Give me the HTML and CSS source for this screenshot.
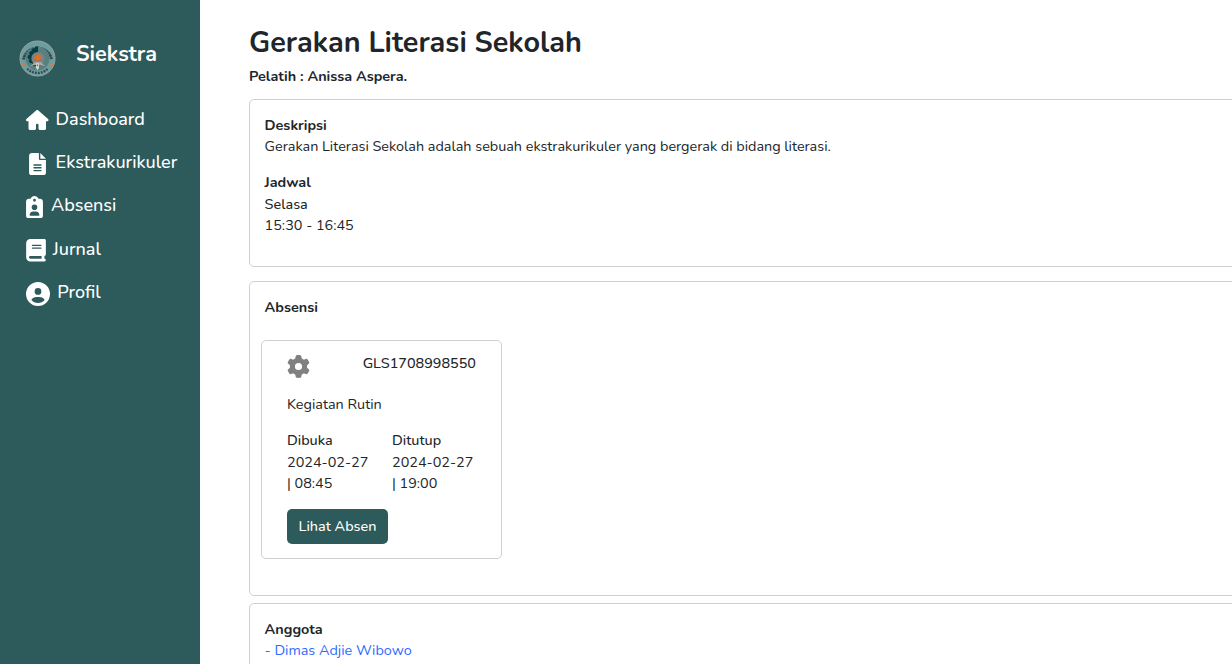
FILE: index.html
```html
<!DOCTYPE html>
<html lang="id">
<head>
<meta charset="utf-8">
<title>Siekstra</title>
<link rel="stylesheet" href="styles.css">
</head>
<body>
<div class="app">
  <aside class="sidebar">
    <div class="brand">
      <svg class="logo" viewBox="0 0 38 38">
        <circle cx="19" cy="19" r="18" fill="#6f9c9d" stroke="#98a3a1" stroke-width="1"/>
        <path d="M4.500 20A14.800 14.800 0 0 1 33.500 20" fill="none" stroke="#304648" stroke-width="2.800" stroke-dasharray="2 .5 2.500 .4"/>
        <path d="M8.500 29.500A14.800 14.800 0 0 0 29.500 29.500" fill="none" stroke="#304648" stroke-width="2.400" stroke-dasharray="1.800 1.200"/>
        <circle cx="19" cy="19" r="12.300" fill="#558182"/>
        <path d="M19 7l-2 .3-.5 2-2-.8-1.300 1.400.6 1.800-2.100.3-1.200 1.800 1.300 1.400-2.400 1v2.500l2.400.8-1.600 1.800 1.500 2.200 2.100-.6-.2 2.600 2.200 1 3.200-1.500z" fill="#083d40" stroke="#083d40"/>
        <circle cx="19.500" cy="19" r="6.800" fill="#7b8281"/>
        <path d="M21 14.500l-5.500 4.300h3.800l-2 2.700 6.500-4h-4z" fill="#fa6a16" stroke="#fa6a16" stroke-width=".8"/>
        <path d="M11.500 27l4.500-4.500h6.500L27 27l-4.500-1.200h-6.500z" fill="#aaa6a3"/>
        <path d="M17.500 24h3v4.500L19 31l-1.500-2.500z" fill="#d8dcda"/>
        <path d="M18.300 25h1.400v2h-1.400z" fill="#b7583a"/>
        <circle cx="4.300" cy="25" r="1.200" fill="#f27429"/><circle cx="33.700" cy="25" r="1.200" fill="#f27429"/>
      </svg>
      <span class="brand-name">Siekstra</span>
    </div>
    <nav class="menu">
      <a class="item"><svg class="icon house" viewBox="0 0 576 512"><path d="M575.800 255.500c0 18-15 32.100-32 32.100h-32l.7 160.200c0 2.700-.2 5.400-.5 8.100V472c0 22.100-17.900 40-40 40H360c-22.100 0-40-17.900-40-40v-88c0-17.700-14.300-32-32-32s-32 14.300-32 32v88c0 22.100-17.900 40-40 40H104c-22.100 0-40-17.900-40-40V287.600H32c-18 0-32-14-32-32.100 0-9 3-17 10-24L266.400 8c7-7 15-8 22-8s15 2 21 7l255.400 224.500c8 7 12 15 11 24z"/></svg><span>Dashboard</span></a>
      <a class="item"><svg class="icon file" viewBox="0 0 384 512"><path d="M64 0C28.700 0 0 28.700 0 64v384c0 35.300 28.700 64 64 64h256c35.300 0 64-28.700 64-64V160H256c-17.700 0-32-14.300-32-32V0H64zm192 0v128h128L256 0zM112 256h160c8.800 0 16 7.200 16 16s-7.200 16-16 16H112c-8.800 0-16-7.200-16-16s7.200-16 16-16zm0 64h160c8.800 0 16 7.200 16 16s-7.200 16-16 16H112c-8.800 0-16-7.200-16-16s7.200-16 16-16zm0 64h160c8.800 0 16 7.200 16 16s-7.200 16-16 16H112c-8.800 0-16-7.200-16-16s7.200-16 16-16z"/></svg><span>Ekstrakurikuler</span></a>
      <a class="item"><svg class="icon clip" viewBox="0 0 384 512"><path d="M192 0c-41.800 0-77.400 26.700-90.500 64H64C28.700 64 0 92.700 0 128v320c0 35.300 28.700 64 64 64h256c35.300 0 64-28.700 64-64V128c0-35.300-28.700-64-64-64h-37.500C269.400 26.700 233.800 0 192 0zm0 64a32 32 0 1 1 0 64 32 32 0 1 1 0-64zM128 256a64 64 0 1 1 128 0 64 64 0 1 1-128 0zM80 432c0-44.200 35.800-80 80-80h64c44.200 0 80 35.800 80 80 0 8.800-7.200 16-16 16H96c-8.800 0-16-7.200-16-16z"/></svg><span>Absensi</span></a>
      <a class="item"><svg class="icon book" viewBox="0 0 448 512"><path d="M96 0C43 0 0 43 0 96v320c0 53 43 96 96 96h320c17.700 0 32-14.300 32-32s-14.300-32-32-32v-64c17.700 0 32-14.300 32-32V32c0-17.700-14.300-32-32-32H96zm0 384h256v64H96c-17.700 0-32-14.300-32-32s14.300-32 32-32zm32-240c0-8.800 7.200-16 16-16h192c8.800 0 16 7.200 16 16s-7.200 16-16 16H144c-8.800 0-16-7.200-16-16zm16 48h192c8.800 0 16 7.200 16 16s-7.200 16-16 16H144c-8.800 0-16-7.200-16-16s7.200-16 16-16z"/></svg><span>Jurnal</span></a>
      <a class="item"><svg class="icon user" viewBox="0 0 512 512"><path d="M399 384.200C376.900 345.800 335.400 320 288 320h-64c-47.400 0-88.900 25.800-111 64.200 35.200 39.200 86.200 63.800 143 63.800s107.800-24.700 143-63.800zM0 256a256 256 0 1 1 512 0A256 256 0 1 1 0 256zm256 16a72 72 0 1 0 0-144 72 72 0 1 0 0 144z"/></svg><span>Profil</span></a>
    </nav>
  </aside>

  <main class="main">
    <h1 class="title">Gerakan Literasi Sekolah</h1>
    <p class="coach">Pelatih : Anissa Aspera.</p>

    <section class="card about">
      <p class="label heading">Deskripsi</p>
      <p>Gerakan Literasi Sekolah adalah sebuah ekstrakurikuler yang bergerak di bidang literasi.</p>
      <p class="label schedule">Jadwal</p>
      <p class="medium">Selasa</p>
      <p>15:30 - 16:45</p>
    </section>

    <section class="card attendance">
      <p class="label heading">Absensi</p>
      <article class="session">
        <header class="session-head">
          <svg class="gear" viewBox="0 0 512 512"><path d="M495.900 166.600c3.200 8.700.5 18.400-6.400 24.600l-43.300 39.400c1.100 8.300 1.700 16.800 1.700 25.400s-.6 17.100-1.700 25.400l43.300 39.400c6.900 6.200 9.600 15.900 6.400 24.600-4.400 11.900-9.700 23.300-15.800 34.300l-4.700 8.100c-6.600 11-14 21.400-22.100 31.200-5.900 7.200-15.700 9.600-24.500 6.800l-55.700-17.700c-13.400 10.300-28.200 18.900-44 25.400l-12.500 57.100c-2 9.100-9 16.300-18.200 17.800-13.800 2.300-28 3.500-42.500 3.500s-28.700-1.200-42.500-3.500c-9.200-1.500-16.200-8.700-18.200-17.800l-12.500-57.100c-15.800-6.500-30.600-15.100-44-25.400l-55.600 17.800c-8.800 2.800-18.600.3-24.500-6.800-8.100-9.800-15.500-20.200-22.100-31.200l-4.700-8.100c-6.100-11-11.400-22.400-15.800-34.300-3.200-8.700-.5-18.400 6.400-24.600l43.300-39.400C64.600 273.100 64 264.600 64 256s.6-17.100 1.700-25.400l-43.300-39.400c-6.900-6.200-9.600-15.900-6.400-24.600 4.400-11.900 9.700-23.300 15.800-34.300l4.700-8.100c6.600-11 14-21.400 22.100-31.200 5.900-7.200 15.700-9.600 24.500-6.800l55.700 17.700c13.400-10.300 28.200-18.900 44-25.400l12.500-57.100c2-9.100 9-16.300 18.200-17.800C227.300 1.200 241.500 0 256 0s28.700 1.200 42.500 3.500c9.200 1.500 16.200 8.700 18.200 17.800l12.500 57.100c15.800 6.500 30.600 15.100 44 25.400l55.700-17.700c8.800-2.800 18.600-.3 24.500 6.800 8.100 9.800 15.500 20.200 22.100 31.200l4.700 8.100c6.100 11 11.400 22.400 15.800 34.300zM256 336a80 80 0 1 0 0-160 80 80 0 1 0 0 160z"/></svg>
          <span class="medium">GLS1708998550</span>
        </header>
        <p>Kegiatan Rutin</p>
        <div class="times">
          <div><p class="medium">Dibuka</p><p>2024-02-27</p><p>| 08:45</p></div>
          <div><p class="medium">Ditutup</p><p>2024-02-27</p><p>| 19:00</p></div>
        </div>
        <button class="button">Lihat Absen</button>
      </article>
    </section>

    <section class="card members">
      <p class="label heading">Anggota</p>
      <a class="member">- Dimas Adjie Wibowo</a>
    </section>
  </main>
</div>
</body>
</html>
```
FILE: styles.css
```css
* { box-sizing: border-box; }
body { margin: 0; background: #fff; color: #212529; font: 400 14.4px/21.6px Nunito, Lato, sans-serif; overflow: hidden; }
h1, p { margin: 0; }
.app { display: flex; height: 664px; overflow: hidden; }

.sidebar { flex: 0 0 200px; background: #2d5a5b; color: #fff; }
.brand { display: flex; align-items: flex-start; gap: 20.4px; height: 98px; padding: 39px 0 0 18.500px; }
.logo { width: 37px; height: 37px; margin-top: 1px; flex: none; }
.brand-name { font-size: 21.6px; font-weight: 700; line-height: 30px; }
.menu { display: flex; flex-direction: column; padding-left: 26px; }
.item { display: flex; align-items: center; height: 43.3px; font-size: 18px; font-weight: 500; }
.icon { fill: #fff; flex: none; margin-top: 2px; }
.house { width: 22.5px; height: 20px; margin-top: 1px; margin-right: 7.1px; }
.file { width: 17px; height: 22.5px; margin-left: 3px; margin-right: 9.6px; }
.clip { width: 17px; height: 22.5px; margin-right: 8px; }
.book { width: 20px; height: 22.5px; margin-right: 6.8px; }
.user { width: 24px; height: 24px; margin-right: 7.2px; }

.main { flex: none; width: 1100px; padding: 26px 0 0 49px; }
.title { font-size: 28.8px; font-weight: 700; line-height: 34px; }
.coach { margin: 6px 0 11.4px; font-weight: 700; }
.card { border: 1px solid #cfd0d1; border-radius: 5px; padding: 15.4px 14.6px; }
.label { font-weight: 700; }
.heading { line-height: 20.6px; }
.medium { font-weight: 500; }
.about { height: 168px; margin-bottom: 14px; }
.schedule { margin-top: 14.4px; }
.attendance { height: 315px; margin-bottom: 7px; }
.session { width: 241px; height: 219px; margin: 22px 0 0 -3.6px; padding: 12px 25px; border: 1px solid #cfd0d1; border-radius: 5px; }
.session-head { display: flex; justify-content: space-between; height: 41px; }
.gear { width: 23px; height: 23px; margin: 2px 0 0 -.3px; fill: #808080; }
.times { display: grid; grid-template-columns: 105px 1fr; margin: 14.4px 0 14px; white-space: nowrap; }
.button { display: block; width: 101px; height: 35px; padding: 0; border: 0; border-radius: 5px; background: #2d5a5b; color: #fff; font: 500 14.4px/35px Nunito, Lato, sans-serif; }
.members { height: 168px; }
.member { color: #2f6bff; }
```
